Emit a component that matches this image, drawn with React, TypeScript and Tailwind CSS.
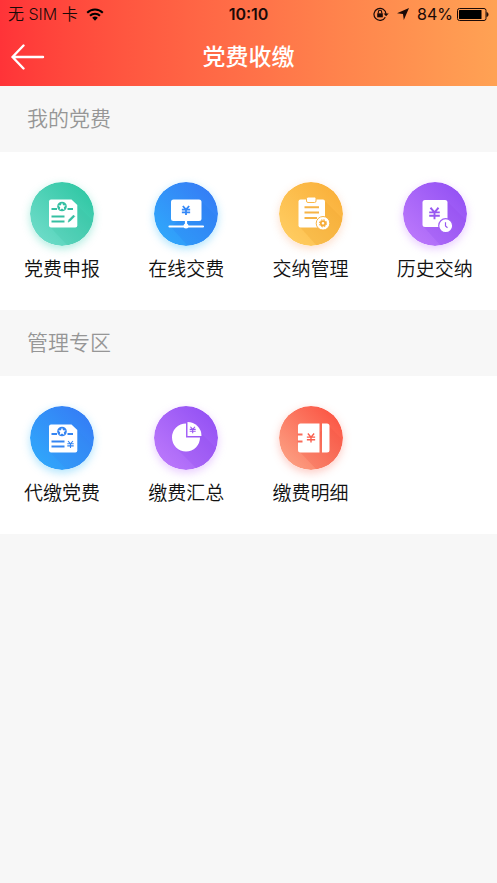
import React from "react";

const FONT = "font-['Liberation_Sans','Noto_Sans_CJK_SC',sans-serif]";

function Yen({ x, y, s, color, w = 1.5 }: { x: number; y: number; s: number; color: string; w?: number }) {
  return (
    <path
      transform={`translate(${x} ${y}) scale(${s / 10})`}
      d="M-3.500-5 0-1 3.500-5M0-1V5M-4.600-1H4.600M-4.600 2H4.600"
      fill="none"
      stroke={color}
      strokeWidth={(w * 10) / s}
    />
  );
}

function Disc({ id, from, to, shadow, children }: { id: string; from: string; to: string; shadow: string; children: React.ReactNode }) {
  return (
    <svg viewBox="0 0 64 64" className={`size-16 rounded-full ${shadow}`} aria-hidden="true">
      <defs>
        <linearGradient id={id} x1="0" y1="1" x2="1" y2="0">
          <stop offset="0.1" stopColor={from} />
          <stop offset="0.9" stopColor={to} />
        </linearGradient>
        <clipPath id={`${id}-clip`}>
          <circle cx="32" cy="32" r="32" />
        </clipPath>
      </defs>
      <circle cx="32" cy="32" r="32" fill={`url(#${id})`} />
      <g clipPath={`url(#${id}-clip)`}>{children}</g>
    </svg>
  );
}

function Sheet({ color }: { color: string }) {
  return (
    <>
      <path d="M47 23 64 40V64H38L20 45Z" fill={color} opacity="0.2" />
      <path d="M21 17.500H41.500L47.300 23V43.500a2 2 0 0 1-2 2H21a2 2 0 0 1-2-2v-24a2 2 0 0 1 2-2Z" fill="#fff" />
      <circle cx="32" cy="24.500" r="4.800" fill={color} />
      <path d="m32 20.800 1.100 2.400 2.600.3-1.900 1.800.5 2.600-2.300-1.300-2.300 1.300.5-2.600-1.900-1.800 2.600-.3Z" fill="#fff" />
      <path d="M21.500 27h5.500M37.500 27H43" stroke={color} strokeWidth="2" />
      <path d="M21.500 34.500H34.500M21.500 39.500H34.500" stroke={color} strokeWidth="2.200" />
    </>
  );
}

function DeclareIcon() {
  return (
    <Disc id="declare" from="#6fdcc9" to="#2fc7a4" shadow="shadow-[0_3px_8px_rgba(60,210,180,0.4)]">
      <Sheet color="#35bfa2" />
      <path d="m38 40.200 1-2.600 4.500-4.500 1.300 1.300-4.500 4.500Z" fill="#35bfa2" stroke="#35bfa2" strokeWidth="0.500" />
    </Disc>
  );
}

function OnlineIcon() {
  return (
    <Disc id="online" from="#30a8fb" to="#357cf5" shadow="shadow-[0_3px_8px_rgba(60,190,250,0.4)]">
      <path d="M47 19 64 36V64H34L17 45Z" fill="#2a78ee" opacity="0.2" />
      <rect x="17" y="17.500" width="30.500" height="21.500" rx="2.500" fill="#fff" />
      <path d="M32 38v6M15.500 44.500H49" stroke="#fff" strokeWidth="2.200" strokeLinecap="round" />
      <circle cx="32" cy="44" r="2.500" fill="#fff" />
      <Yen x={32} y={28.500} s={9} color="#3488f7" w={1.800} />
    </Disc>
  );
}

function ManageIcon() {
  return (
    <Disc id="manage" from="#ffcd62" to="#fab03a" shadow="shadow-[0_3px_8px_rgba(250,150,90,0.3)]">
      <path d="M45 18 64 37V64H38L20 44Z" fill="#f0a42e" opacity="0.3" />
      <rect x="19.500" y="17.500" width="26.500" height="28" rx="2" fill="#fff" />
      <rect x="27.500" y="15" width="9.500" height="5.500" rx="1.500" fill="#fff" stroke="#fbb847" strokeWidth="1" />
      <path d="M25.500 25.300H40M25.500 30.600H40M25.500 36H38" stroke="#f6b447" strokeWidth="2" />
      <circle cx="44" cy="41.300" r="6.800" fill="#fff" stroke="#f8b342" strokeWidth="1" />
      <circle cx="44" cy="41.300" r="2.200" fill="none" stroke="#f6ab38" strokeWidth="1.800" />
      <circle cx="44" cy="41.300" r="3.600" fill="none" stroke="#f6ab38" strokeWidth="1" strokeDasharray="1.600 1.230" />
    </Disc>
  );
}

function HistoryIcon() {
  return (
    <Disc id="history" from="#bb78fb" to="#9351f4" shadow="shadow-[0_3px_8px_rgba(200,130,255,0.4)]">
      <path d="M44 19 64 39V64H38L20 44Z" fill="#8a45ea" opacity="0.2" />
      <rect x="19.500" y="18" width="25" height="27" rx="2.500" fill="#fff" />
      <Yen x={31.500} y={31.500} s={11.500} color="#9858f0" w={1.900} />
      <circle cx="42.700" cy="43.700" r="7" fill="#fff" stroke="#a160f6" strokeWidth="1.200" />
      <path d="M42.500 40.300V44l2 1.800" fill="none" stroke="#9858f0" strokeWidth="1.200" />
    </Disc>
  );
}

function ProxyIcon() {
  return (
    <Disc id="proxy" from="#30a8fb" to="#357cf5" shadow="shadow-[0_3px_8px_rgba(60,190,250,0.4)]">
      <g transform="translate(0 1)">
        <Sheet color="#3585f2" />
        <Yen x={40.500} y={37.500} s={7} color="#3585f2" w={1.100} />
      </g>
    </Disc>
  );
}

function SummaryIcon() {
  return (
    <Disc id="summary" from="#bb78fb" to="#9351f4" shadow="shadow-[0_3px_8px_rgba(200,130,255,0.4)]">
      <path d="M42 22 64 44V64H44L22 42Z" fill="#8a45ea" opacity="0.2" />
      <path d="M32 17.500V31.500H46A14 14 0 1 1 32 17.500Z" fill="#fff" />
      <path d="M33.500 16A14 14 0 0 1 47.500 30H33.500Z" fill="#fff" />
      <Yen x={38.700} y={24} s={6.500} color="#9858f0" w={1.100} />
    </Disc>
  );
}

function DetailIcon() {
  return (
    <Disc id="detail" from="#fca083" to="#fb5443" shadow="shadow-[0_3px_8px_rgba(250,110,90,0.35)]">
      <path d="M49 19 64 34V64H38L20 45Z" fill="#f0493a" opacity="0.2" />
      <path d="M21.500 17.500H40.500V46.500H21.500a2.500 2.500 0 0 1-2.500-2.500V20a2.500 2.500 0 0 1 2.500-2.500ZM43 17.500H48A2.500 2.500 0 0 1 50.500 20V44a2.500 2.500 0 0 1-2.500 2.500H43Z" fill="#fff" />
      <path d="M18.500 28.500h5M18.500 35.500h5" stroke="#fa6b58" strokeWidth="2" />
      <Yen x={32} y={32} s={9} color="#fa5f4e" w={1.400} />
    </Disc>
  );
}

type Item = { label: string; icon: React.ReactNode };

function Section({ title, items }: { title: string; items: Item[] }) {
  return (
    <section>
      <h2 className="bg-[#f7f7f7] px-[27px] py-[18px] text-[21px] leading-[30px] font-[350] text-[#969696]">{title}</h2>
      <div className="grid grid-cols-4 bg-white pt-[30px] pb-[26px]">
        {items.map((item) => (
          <button key={item.label} type="button" className="flex flex-col items-center gap-[10px]">
            {item.icon}
            <span className="text-[19px] leading-7 font-[350] whitespace-nowrap text-[#111]">{item.label}</span>
          </button>
        ))}
      </div>
    </section>
  );
}

function StatusBar() {
  return (
    <div className="grid h-7 grid-cols-[1fr_auto_1fr] items-center px-2 font-['Inter','Noto_Sans_CJK_SC',sans-serif] text-base text-[#1a0a08]">
      <div className="flex items-center gap-2">
        <span className="font-[350]">无 SIM 卡</span>
        <svg viewBox="0 0 18 13" className="h-[13px] w-[18px]" aria-hidden="true">
          <path d="M1.200 4.800a11 11 0 0 1 15.600 0M4 7.800a7 7 0 0 1 10 0" fill="none" stroke="#000" strokeWidth="2" />
          <path d="M6.200 9.800a4 4 0 0 1 5.600 0L9 12.700Z" fill="#000" />
        </svg>
      </div>
      <span className="font-semibold">10:10</span>
      <div className="flex items-center justify-end">
        <svg viewBox="0 0 16 14" className="mr-2 h-[14px] w-4" aria-hidden="true">
          <path d="M12.300 10.200A6 6 0 1 1 13 7" fill="none" stroke="#1a0a08" strokeWidth="1.200" />
          <path d="M10.500 6.500H15.700L13.100 9.300Z" fill="#1a0a08" />
          <rect x="4.200" y="6.300" width="5.600" height="4" fill="#1a0a08" />
          <path d="M5.300 6.500V5a1.700 1.700 0 0 1 3.400 0v1.500" fill="none" stroke="#1a0a08" strokeWidth="1.100" />
        </svg>
        <svg viewBox="0 0 12 12" className="mr-2 size-3" aria-hidden="true">
          <path d="M12 0 6.800 12 6 6 0 5.300Z" fill="#1a0a08" />
        </svg>
        <span>84%</span>
        <svg viewBox="0 0 32 13" className="ml-1 h-[13px] w-8" aria-hidden="true">
          <rect x="0.500" y="0.500" width="28.500" height="12" rx="2" fill="none" stroke="#1a0a08" />
          <rect x="2" y="2" width="22.500" height="9" rx="0.500" fill="#000" />
          <path d="M30 4.500a2.500 2.500 0 0 1 0 4Z" fill="#1a0a08" stroke="#1a0a08" />
        </svg>
      </div>
    </div>
  );
}

export default function App() {
  return (
    <div className={`min-h-screen bg-[#f7f7f7] ${FONT}`}>
      <header className="bg-linear-to-r from-[#ff3338] via-[#ff7048] to-[#ffa254]">
        <StatusBar />
        <div className="grid h-[58px] grid-cols-[1fr_auto_1fr] items-center px-[11px]">
          <button type="button" aria-label="返回" className="w-[34px]">
            <svg viewBox="0 0 34 26" className="h-[26px] w-[34px]" aria-hidden="true">
              <path d="M12.500 1.500 1.500 13 12.500 24.500M1.500 13H32" fill="none" stroke="#fff" strokeWidth="2.400" strokeLinecap="round" strokeLinejoin="round" />
            </svg>
          </button>
          <h1 className="text-[23px] leading-8 font-medium text-white">党费收缴</h1>
        </div>
      </header>
      <main>
        <Section
          title="我的党费"
          items={[
            { label: "党费申报", icon: <DeclareIcon /> },
            { label: "在线交费", icon: <OnlineIcon /> },
            { label: "交纳管理", icon: <ManageIcon /> },
            { label: "历史交纳", icon: <HistoryIcon /> },
          ]}
        />
        <Section
          title="管理专区"
          items={[
            { label: "代缴党费", icon: <ProxyIcon /> },
            { label: "缴费汇总", icon: <SummaryIcon /> },
            { label: "缴费明细", icon: <DetailIcon /> },
          ]}
        />
      </main>
    </div>
  );
}
